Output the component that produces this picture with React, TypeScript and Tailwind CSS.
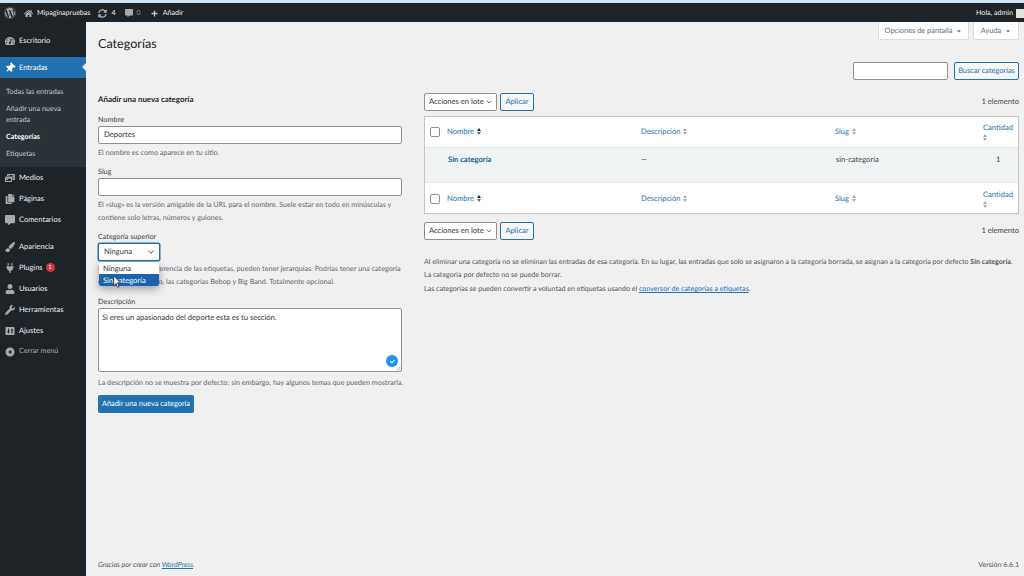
import type { ReactNode } from 'react'
import {
  FaWordpress,
  FaHome,
  FaSyncAlt,
  FaCommentAlt,
  FaPlus,
  FaTachometerAlt,
  FaThumbtack,
  FaPhotoVideo,
  FaCopy,
  FaPaintBrush,
  FaPlug,
  FaUser,
  FaWrench,
  FaCheck,
  FaCaretDown,
} from 'react-icons/fa'
import { FiChevronDown } from 'react-icons/fi'

const SettingsIcon = () => (
  <svg viewBox="0 0 20 20" className="h-[10px] w-[10px]">
    <path
      fill="currentColor"
      fillRule="evenodd"
      d="M2 2h16a1 1 0 0 1 1 1v14a1 1 0 0 1-1 1H2a1 1 0 0 1-1-1V3a1 1 0 0 1 1-1zM6 5v6H4l3 4 3-4H8V5zM13 15V9h-2l3-4 3 4h-2v6z"
    />
  </svg>
)

const CollapseIcon = () => (
  <svg viewBox="0 0 20 20" className="h-[10px] w-[10px]">
    <path fill="currentColor" fillRule="evenodd" d="M10 1a9 9 0 1 1 0 18 9 9 0 0 1 0-18zM12.500 5.500 6.500 10l6 4.500z" />
  </svg>
)

const MenuItem = ({ icon, label, className = '', badge }: { icon: ReactNode; label: string; className?: string; badge?: string }) => (
  <div className={`flex h-[21px] items-center text-[#f0f0f1] ${className}`}>
    <span className="flex w-[19px] shrink-0 justify-center pl-[1px] text-[10px] text-[#a7aaad]">{icon}</span>
    <span>{label}</span>
    {badge && (
      <span className="ml-[3px] flex h-[9px] w-[9px] items-center justify-center rounded-full bg-[#d63638] text-[6px] text-white">
        {badge}
      </span>
    )}
  </div>
)

const Sidebar = () => (
  <aside className="flex w-[86px] shrink-0 flex-col bg-[#1d2327] pt-[8px] text-[7.5px]">
    <MenuItem icon={<FaTachometerAlt />} label="Escritorio" />
    <div className="relative mt-[6px] flex h-[21px] items-center bg-[#2271b1] text-white">
      <span className="flex w-[19px] shrink-0 justify-center pl-[1px] text-[10px]">
        <FaThumbtack className="rotate-45" />
      </span>
      <span>Entradas</span>
      <span className="absolute right-0 top-[6px] border-y-[4px] border-r-[4px] border-y-transparent border-r-[#f0f0f1]" />
    </div>
    <div className="flex flex-col bg-[#2c3338] pb-[5px] pl-[6px] pr-[4px] pt-[5px] text-[7.2px] leading-[11px] text-[#c3c4c7]">
      <div className="py-[3px]">Todas las entradas</div>
      <div className="py-[3px]">Añadir una nueva entrada</div>
      <div className="py-[3px] font-bold text-white">Categorías</div>
      <div className="py-[3px]">Etiquetas</div>
    </div>
    <div className="flex flex-col">
      <MenuItem icon={<FaPhotoVideo />} label="Medios" />
      <MenuItem icon={<FaCopy />} label="Páginas" />
      <MenuItem icon={<FaCommentAlt />} label="Comentarios" />
      <MenuItem icon={<FaPaintBrush />} label="Apariencia" className="mt-[6px]" />
      <MenuItem icon={<FaPlug />} label="Plugins" badge="1" />
      <MenuItem icon={<FaUser />} label="Usuarios" />
      <MenuItem icon={<FaWrench />} label="Herramientas" />
      <MenuItem icon={<SettingsIcon />} label="Ajustes" />
      <div className="flex h-[21px] items-center text-[7.2px] text-[#a7aaad]">
        <span className="flex w-[19px] shrink-0 justify-center pl-[1px]">
          <CollapseIcon />
        </span>
        Cerrar menú
      </div>
    </div>
  </aside>
)

const TopBar = () => (
  <div className="flex h-[19px] items-center bg-[#1d2327] pl-[4px] pt-[1px] text-[7.1px] text-[#f0f0f1]">
    <FaWordpress className="text-[12px] text-[#a7aaad]" />
    <FaHome className="ml-[8px] text-[9px] text-[#a7aaad]" />
    <span className="ml-[4px]">Mipaginapruebas</span>
    <FaSyncAlt className="ml-[8px] text-[9px] text-[#a7aaad]" />
    <span className="ml-[4px]">4</span>
    <FaCommentAlt className="ml-[9px] text-[8px] text-[#a7aaad]" />
    <span className="ml-[4px] text-[#8c8f94]">0</span>
    <FaPlus className="ml-[10px] text-[7px] text-[#c3c4c7]" />
    <span className="ml-[5px]">Añadir</span>
    <span className="ml-auto">Hola, admin</span>
    <span className="ml-[3px] h-[9px] w-[8px] bg-[#e2e2e2]" />
  </div>
)

const SortArrows = ({ active = false }: { active?: boolean }) => (
  <span className="ml-[3px] inline-flex flex-col gap-[1px] align-middle">
    <span className={`border-x-[2.5px] border-b-[3px] border-x-transparent ${active ? 'border-b-[#1d2327]' : 'border-b-[#a7aaad]'}`} />
    <span className={`border-x-[2.5px] border-t-[3px] border-x-transparent ${active ? 'border-t-[#646970]' : 'border-t-[#a7aaad]'}`} />
  </span>
)

const HeadRow = ({ className = '' }: { className?: string }) => (
  <div className={`grid h-[30px] grid-cols-[22px_194px_194px_1fr_35px] items-center bg-white text-[7.6px] text-[#2271b1] ${className}`}>
    <span className="ml-[5px] h-[10px] w-[10px] rounded-[2px] border border-[#8c8f94] bg-white" />
    <span className="flex items-center">
      Nombre
      <SortArrows active />
    </span>
    <span className="flex items-center">
      Descripción
      <SortArrows />
    </span>
    <span className="flex items-center">
      Slug
      <SortArrows />
    </span>
    <span className="flex flex-col items-start pb-[1px] leading-[11px]">
      Cantidad
      <span className="-ml-[3px] flex pt-[1px]">
        <SortArrows />
      </span>
    </span>
  </div>
)

const BulkBar = () => (
  <div className="flex h-[18px] items-center gap-[3px] text-[7.6px]">
    <div className="flex h-[18px] w-[73px] items-center justify-between whitespace-nowrap rounded-[2px] border border-[#8c8f94] bg-white pl-[4px] pr-[3px] text-[#2c3338]">
      Acciones en lote
      <FiChevronDown className="text-[8px]" />
    </div>
    <div className="flex h-[18px] w-[34px] items-center justify-center rounded-[2px] border border-[#2271b1] bg-[#f6f7f7] text-[#2271b1]">
      Aplicar
    </div>
    <span className="ml-auto text-[#3c434a]">1 elemento</span>
  </div>
)

const Field = ({ label, value, className = '' }: { label: string; value?: string; className?: string }) => (
  <div className={`flex flex-col ${className}`}>
    <label className="text-[7.3px] leading-[11px] text-[#3c434a]">{label}</label>
    <div className="mt-[1px] flex h-[18px] w-[304px] items-center rounded-[2px] border border-[#8c8f94] bg-white px-[5px] text-[7.6px] text-[#2c3338]">
      {value}
    </div>
  </div>
)

const AddForm = () => (
  <section className="w-[305px] shrink-0 pt-[1px]">
    <h2 className="text-[7.9px] font-bold leading-[11px] text-[#1d2327]">Añadir una nueva categoría</h2>
    <Field label="Nombre" value="Deportes" className="mt-[9px]" />
    <p className="mt-[3px] text-[7.2px] leading-[11px] text-[#646970]">El nombre es como aparece en tu sitio.</p>
    <Field label="Slug" className="mt-[8px]" />
    <p className="mt-[2px] text-[7.2px] leading-[13px] text-[#646970]">
      El «slug» es la versión amigable de la URL para el nombre. Suele estar en todo en minúsculas y contiene solo letras, números y guiones.
    </p>

    <div className="relative mt-[7px]">
      <label className="block text-[7.2px] leading-[11px] text-[#3c434a]">Categoría superior</label>
      <div className="mt-[1px] flex h-[18px] w-[62px] items-center justify-between rounded-[2px] border border-[#2271b1] bg-white pl-[5px] pr-[3px] text-[7.6px] text-[#2c3338] shadow-[0_0_0_0.5px_#2271b1]">
        Ninguna
        <FiChevronDown className="text-[10px] text-[#2c3338]" />
      </div>
      <p className="mt-[1px] pr-[2px] text-[7.2px] leading-[13px] text-[#646970]">
        Las categorías, a diferencia de las etiquetas, pueden tener jerarquías. Podrías tener una categoría de Jazz y, por debajo, las categorías Bebop y Big Band. Totalmente opcional.
      </p>
      {/* open select list */}
      <div className="absolute left-[1px] top-[31px] w-[60px] overflow-hidden rounded-[2px] bg-white text-[7.6px] leading-[12px] shadow-[0_3px_8px_rgba(0,0,0,0.35)]">
        <div className="h-[12px] pl-[4px] text-[#2c3338]">Ninguna</div>
        <div className="h-[12px] bg-[#1b64ad] pl-[4px] text-white">Sin categoría</div>
      </div>
      <svg viewBox="0 0 12 18" className="absolute left-[15px] top-[44px] h-[14px] w-[9px]">
        <path d="M1 1v13l3-3 2 5 2-1-2-5h4z" fill="#fff" stroke="#222" strokeWidth="1" />
      </svg>
    </div>

    <div className="relative mt-[8px]">
      <label className="block text-[7.2px] leading-[11px] text-[#3c434a]">Descripción</label>
      <div className="mt-[1px] h-[64px] w-[304px] rounded-[2px] border border-[#8c8f94] bg-white px-[3px] py-[2px] text-[7.6px] leading-[12px] text-[#2c3338]">
        Si eres un apasionado del deporte esta es tu sección.
      </div>
      <span className="absolute right-[5px] top-[59px] flex h-[12px] w-[12px] items-center justify-center rounded-full bg-[#1e90ff] text-[5px] text-white">
        <FaCheck />
      </span>
      <svg viewBox="0 0 6 6" className="absolute bottom-[1px] right-[2px] h-[5px] w-[5px]">
        <path d="M0.500 5.500 5.500 0.500M3 5.500 5.500 3" stroke="#8c8f94" strokeWidth="0.7" fill="none" />
      </svg>
    </div>
    <p className="mt-[5px] whitespace-nowrap text-[7.2px] leading-[11px] text-[#646970]">
      La descripción no se muestra por defecto; sin embargo, hay algunos temas que pueden mostrarla.
    </p>
    <div className="mt-[7px] flex h-[18px] w-[96px] items-center justify-center whitespace-nowrap rounded-[2px] bg-[#2271b1] text-[7.4px] text-white">
      Añadir una nueva categoría
    </div>
  </section>
)

const TablePane = () => (
  <section className="min-w-0 flex-1 text-[7.6px] text-[#3c434a]">
    <BulkBar />
    <div className="mt-[5px] flex flex-col gap-[1px] border border-[#c3c4c7] bg-[#e4e5e6]">
      <HeadRow />
      <div className="grid h-[34px] grid-cols-[23px_193px_194px_1fr_35px] bg-[#f0f3f3] pt-[6px] leading-[11px]">
        <span />
        <span className="font-bold text-[#135e96]">Sin categoría</span>
        <span>—</span>
        <span className="pl-[1px]">sin-categoría</span>
        <span className="pl-[13px]">1</span>
      </div>
      <HeadRow className="pt-[1px]" />
    </div>
    <div className="mt-[8px]">
      <BulkBar />
    </div>
    <div className="mt-[15px] text-[7.1px] leading-[13px] text-[#50575e]">
      <p>
        Al eliminar una categoría no se eliminan las entradas de esa categoría. En su lugar, las entradas que solo se asignaron a la categoría borrada, se asignan a la categoría por defecto <b>Sin categoría</b>. La categoría por defecto no se puede borrar.
      </p>
      <p className="mt-[1px]">
        Las categorías se pueden convertir a voluntad en etiquetas usando el <span className="text-[#2271b1] underline">conversor de categorías a etiquetas</span>.
      </p>
    </div>
  </section>
)

export default function App() {
  return (
    <div className="flex h-[576px] w-[1024px] flex-col overflow-hidden bg-[#f0f0f1] font-['Lato',sans-serif] antialiased [text-rendering:geometricPrecision]">
      <div className="h-[3px] bg-[#cfe3f3]" />
      <TopBar />
      <div className="flex min-h-0 flex-1">
        <Sidebar />
        <main className="flex min-w-0 flex-1 flex-col pl-[12px] pr-[5px]">
          <div className="flex justify-end gap-[4px] text-[7.4px] text-[#646970]">
            <div className="flex h-[18px] w-[91px] items-center justify-center gap-[4px] whitespace-nowrap rounded-b-[2px] border border-t-0 border-[#dcdcde] bg-white">
              Opciones de pantalla <FaCaretDown className="text-[6px]" />
            </div>
            <div className="flex h-[18px] w-[46px] items-center justify-center gap-[4px] rounded-b-[2px] border border-t-0 border-[#dcdcde] bg-white">
              Ayuda <FaCaretDown className="text-[6px]" />
            </div>
          </div>
          <h1 className="-mt-[5px] text-[12.6px] leading-[18px] text-[#1d2327]">Categorías</h1>
          <div className="mt-[9px] flex justify-end gap-[6px]">
            <div className="h-[18px] w-[95px] rounded-[2px] border border-[#8c8f94] bg-white" />
            <div className="flex h-[18px] w-[65px] items-center justify-center whitespace-nowrap rounded-[2px] border border-[#2271b1] bg-[#f6f7f7] text-[7.4px] text-[#2271b1]">
              Buscar categorías
            </div>
          </div>
          <div className="mt-[13px] flex gap-[21px]">
            <AddForm />
            <TablePane />
          </div>
          <footer className="mt-auto flex justify-between pb-[6px] text-[7.1px] leading-[11px] text-[#50575e]">
            <span className="italic">
              Gracias por crear con <span className="text-[#2271b1] underline">WordPress</span>.
            </span>
            <span>Versión 6.6.1</span>
          </footer>
        </main>
      </div>
    </div>
  )
}
